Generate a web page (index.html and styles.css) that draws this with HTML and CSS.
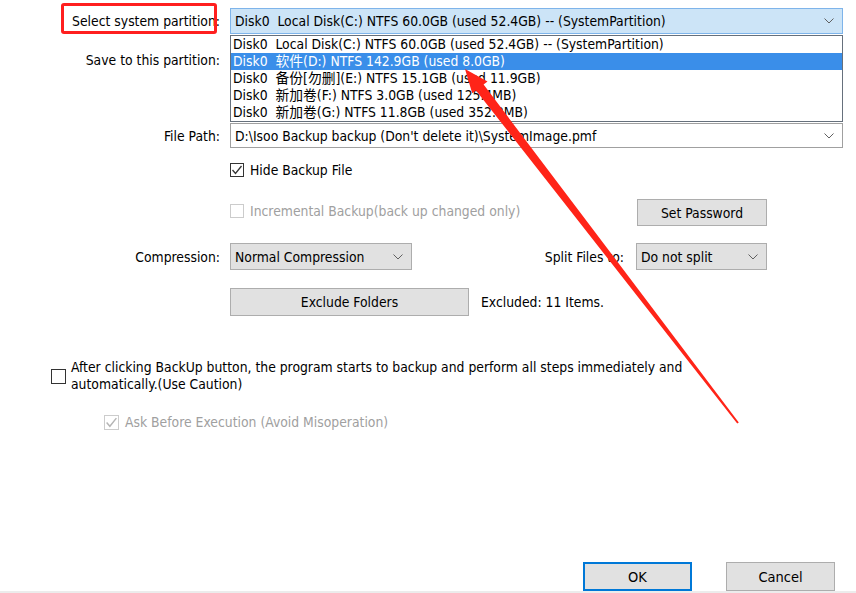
FILE: index.html
```html
<!DOCTYPE html>
<html lang="en">
<head>
    <meta charset="UTF-8">
    <title>Backup Settings</title>
    <link rel="stylesheet" href="styles.css">
</head>
<body>

    <div class="dialog">

        <!-- partition pickers -->
        <div class="row row-system">
            <div class="lbl">Select system partition:</div>
            <div class="field">
                <div class="combo combo-hot">
                    <span>Disk0&nbsp; Local Disk(C:) NTFS 60.0GB (used 52.4GB) -- (SystemPartition)</span>
                    <svg class="chev" width="10" height="6" viewBox="0 0 10 6"><polyline points="0.5,0.5 5,5 9.5,0.5" fill="none" stroke="#606060" stroke-width="1"/></svg>
                </div>
                <ul class="droplist">
                    <li>Disk0&nbsp; Local Disk(C:) NTFS 60.0GB (used 52.4GB) -- (SystemPartition)</li>
                    <li class="picked">Disk0&nbsp; 软件(D:) NTFS 142.9GB (used 8.0GB)</li>
                    <li>Disk0&nbsp; 备份[勿删](E:) NTFS 15.1GB (used 11.9GB)</li>
                    <li>Disk0&nbsp; 新加卷(F:) NTFS 3.0GB (used 125.4MB)</li>
                    <li>Disk0&nbsp; 新加卷(G:) NTFS 11.8GB (used 352.8MB)</li>
                </ul>
            </div>
        </div>

        <div class="row row-save">
            <div class="lbl">Save to this partition:</div>
            <div class="field">
                <div class="combo combo-white"></div>
            </div>
        </div>

        <div class="row row-path">
            <div class="lbl">File Path:</div>
            <div class="field">
                <div class="combo combo-white">
                    <span>D:\Isoo Backup backup (Don't delete it)\SystemImage.pmf</span>
                    <svg class="chev" width="10" height="6" viewBox="0 0 10 6"><polyline points="0.5,0.5 5,5 9.5,0.5" fill="none" stroke="#606060" stroke-width="1"/></svg>
                </div>
            </div>
        </div>

        <!-- options -->
        <div class="row row-hide">
            <div class="lbl"></div>
            <div class="check-line">
                <span class="box checked">
                    <svg width="12" height="12" viewBox="0 0 12 12"><polyline points="1.5,6 4.5,9.5 10.5,2" fill="none" stroke="#333" stroke-width="1.3"/></svg>
                </span>
                <span>Hide Backup File</span>
            </div>
        </div>

        <div class="row row-incr">
            <div class="lbl"></div>
            <div class="field spread">
                <div class="check-line off lifted">
                    <span class="box"></span>
                    <span>Incremental Backup(back up changed only)</span>
                </div>
                <button class="btn btn-pass">Set Password</button>
            </div>
        </div>

        <div class="row row-comp">
            <div class="lbl">Compression:</div>
            <div class="field spread">
                <div class="combo combo-gray combo-comp">
                    <span>Normal Compression</span>
                    <svg class="chev" width="10" height="6" viewBox="0 0 10 6"><polyline points="0.5,0.5 5,5 9.5,0.5" fill="none" stroke="#606060" stroke-width="1"/></svg>
                </div>
                <div class="split">
                    <span>Split Files to:</span>
                    <div class="combo combo-gray combo-split">
                        <span>Do not split</span>
                        <svg class="chev" width="10" height="6" viewBox="0 0 10 6"><polyline points="0.5,0.5 5,5 9.5,0.5" fill="none" stroke="#606060" stroke-width="1"/></svg>
                    </div>
                </div>
            </div>
        </div>

        <div class="row row-excl">
            <div class="lbl"></div>
            <button class="btn btn-excl">Exclude Folders</button>
            <span class="excl-count">Excluded: 11 Items.</span>
        </div>

        <div class="row row-auto">
            <span class="box big"></span>
            <span class="auto-text">After clicking BackUp button, the program starts to backup and perform all steps immediately and automatically.(Use Caution)</span>
        </div>

        <div class="row row-ask">
            <div class="check-line off">
                <span class="box big">
                    <svg width="13" height="13" viewBox="0 0 12 12"><polyline points="1.5,6 4.5,9.5 10.5,2" fill="none" stroke="#b5b5b5" stroke-width="1.3"/></svg>
                </span>
                <span>Ask Before Execution (Avoid Misoperation)</span>
            </div>
        </div>

        <div class="footer">
            <button class="btn btn-ok">OK</button>
            <button class="btn btn-cancel">Cancel</button>
        </div>

        <!-- annotations drawn on the screenshot -->
        <div class="red-mark"></div>
        <svg class="arrow" width="856" height="593" viewBox="0 0 856 593">
            <polygon points="465,69 487.5,81.6 483.6,84.6 738.8,422.4 737.2,423.6 476,90.4 472.2,93.3" fill="#ff2418"/>
        </svg>
    </div>
    <div class="strip"></div>

</body>
</html>
```

FILE: styles.css
```css
body {
    margin: 0;
    background: #ffffff;
    font-family: "DejaVu Sans Condensed", "DejaVu Sans", "Noto Sans CJK SC", sans-serif;
    font-size: 13.8px;
    color: #000000;
}

.dialog {
    position: relative;
    height: 591px;
    display: flex;
    flex-direction: column;
    overflow: hidden;
}

.strip {
    height: 2px;
    background: #ececec;
}

.row {
    display: flex;
    align-items: center;
    flex: none;
}

.lbl {
    width: 220px;
    margin-right: 10px;
    text-align: right;
    flex: none;
    white-space: nowrap;
}

.field {
    position: relative;
    width: 613px;
}

/* row spacing */
.row-system { margin-top: 8px; height: 26px; }
.row-save { margin-top: 13px; height: 26px; }
.row-path { margin-top: 50px; height: 25px; }
.row-hide { margin-top: 14px; height: 15px; }
.row-incr { margin-top: 22px; height: 27px; }
.row-comp { margin-top: 17px; height: 27px; }
.row-excl { margin-top: 18px; height: 28px; }
.row-auto { margin-top: 43px; padding-left: 51px; }
.row-ask { margin-top: 21px; padding-left: 104px; height: 16px; }

/* combos */
.combo {
    box-sizing: border-box;
    height: 26px;
    display: flex;
    align-items: center;
    justify-content: space-between;
    padding: 0 8px 0 4px;
    border: 1px solid #adadad;
    white-space: nowrap;
}
.combo-hot {
    background: #cce4f7;
    border-color: #7eb4ea;
}
.combo-white {
    background: #ffffff;
    border-color: #a0a0a0;
    height: 25px;
}
.combo-gray {
    background: #e1e1e1;
    height: 27px;
}
.combo-comp { width: 182px; }
.combo-split { width: 131px; }

.chev { flex: none; }

.droplist {
    position: absolute;
    top: 27px;
    left: 0;
    right: 0;
    margin: 0;
    padding: 0;
    list-style: none;
    background: #ffffff;
    border: 1px solid #66707c;
    z-index: 5;
}
.droplist li {
    height: 17px;
    line-height: 17px;
    padding-left: 2px;
    white-space: nowrap;
}
.droplist li.picked {
    background: #3a8ee9;
    color: #ffffff;
}

/* checkboxes */
.check-line {
    display: flex;
    align-items: center;
    gap: 6px;
    white-space: nowrap;
}
.check-line.off {
    color: #a0a0a0;
}
.check-line.lifted {
    margin-bottom: 4px;
}
.box {
    box-sizing: border-box;
    width: 14px;
    height: 14px;
    border: 1px solid #333333;
    background: #ffffff;
    display: flex;
    align-items: center;
    justify-content: center;
    flex: none;
}
.off .box {
    border-color: #cccccc;
}
.box.big {
    width: 15px;
    height: 15px;
}

.spread {
    display: flex;
    align-items: center;
    justify-content: space-between;
    width: 537px;
}
.split {
    display: flex;
    align-items: center;
    gap: 12px;
}

/* buttons */
.btn {
    box-sizing: border-box;
    font: inherit;
    color: #000000;
    background: #e1e1e1;
    border: 1px solid #adadad;
    padding: 0;
    cursor: pointer;
}
.btn-pass { width: 130px; height: 27px; }
.btn-excl { width: 239px; height: 28px; }
.excl-count { margin-left: 12px; }

.auto-text {
    width: 612px;
    margin-left: 5px;
    line-height: 17px;
}

.footer {
    margin-top: auto;
    display: flex;
    justify-content: flex-end;
    gap: 34px;
    padding-right: 21px;
}
.btn-ok,
.btn-cancel {
    width: 109px;
    height: 29px;
    font-size: 14.5px;
}
.btn-ok {
    border: 2px solid #0078d7;
}

/* screenshot annotations */
.red-mark {
    position: absolute;
    left: 61px;
    top: 3px;
    width: 156px;
    height: 31px;
    box-sizing: border-box;
    border: 3px solid #ff1f1f;
    border-radius: 3px;
}
.arrow {
    position: absolute;
    left: 0;
    top: 0;
    pointer-events: none;
    z-index: 10;
}
```
